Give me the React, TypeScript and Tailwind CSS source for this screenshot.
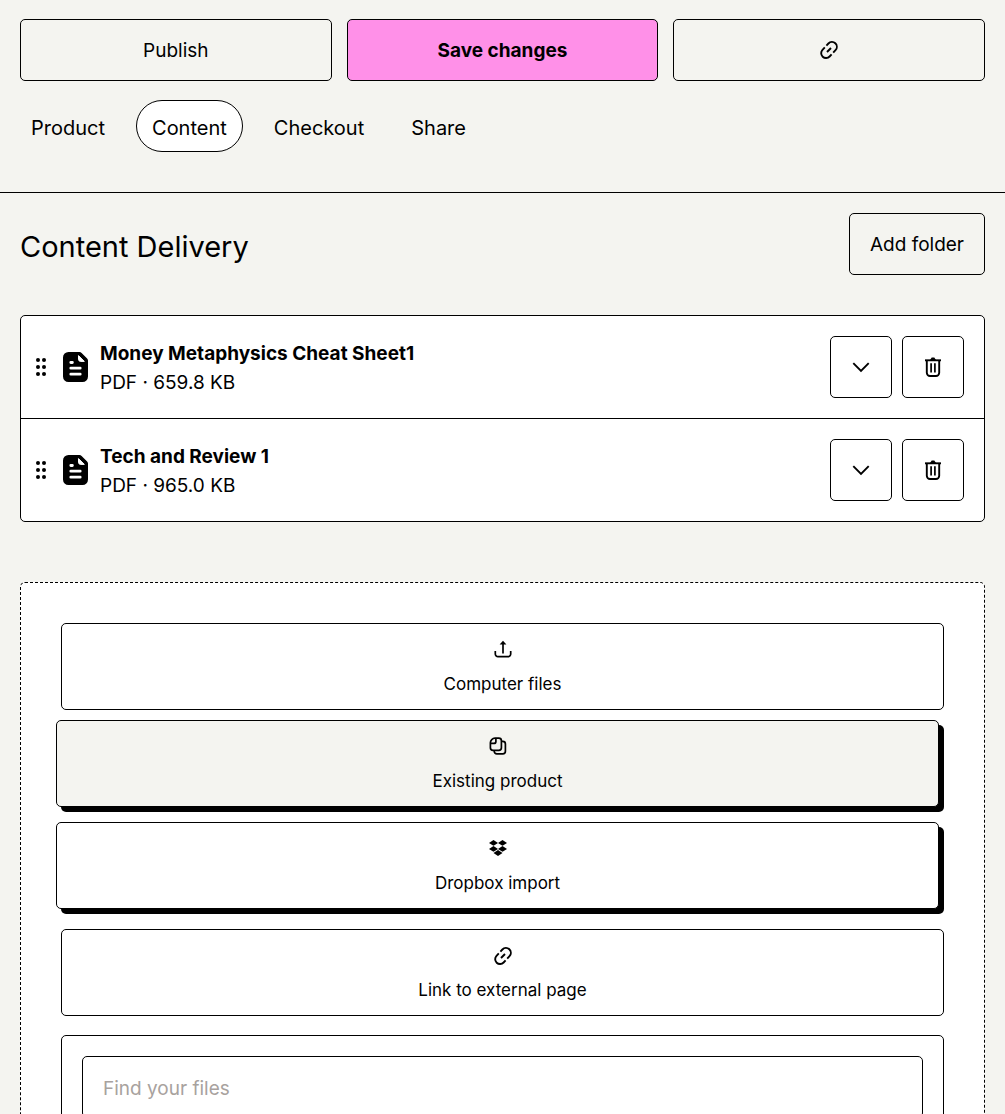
import React from "react";
import clsx from "clsx";

interface ProductFile {
  id: number;
  name: string;
  type: string;
  size: string;
}

interface UploadOption {
  label: string;
  icon: React.ReactNode;
  raised?: boolean;
  muted?: boolean;
}

const files: ProductFile[] = [
  { id: 1, name: "Money Metaphysics Cheat Sheet1", type: "PDF", size: "659.8 KB" },
  { id: 2, name: "Tech and Review 1", type: "PDF", size: "965.0 KB" },
];

const tabs = ["Product", "Content", "Checkout", "Share"];

const LinkIcon = () => (
  <svg width="20" height="20" viewBox="0 0 20 20" fill="none" stroke="currentColor" strokeWidth="1.9" aria-hidden="true">
    <path d="M7.400 5.600 9.400 3.500a4.700 4.700 0 0 1 7.100 6.700L14.200 12.600" />
    <path d="M12.600 14.400 10.600 16.500a4.700 4.700 0 0 1-7.100-6.700L5.800 7.400" />
    <path d="M8 12l4-4" />
  </svg>
);

const UploadIcon = () => (
  <svg width="18" height="18" viewBox="0 0 18 18" fill="none" stroke="currentColor" strokeWidth="1.7" aria-hidden="true">
    <path d="M9 13.500V2" />
    <path d="M5.600 4.400 9 .8l3.400 3.600z" fill="currentColor" stroke="none" />
    <path d="M1.300 11v3a2.700 2.700 0 0 0 2.700 2.700h10a2.700 2.700 0 0 0 2.700-2.700v-3" />
  </svg>
);

const CopyIcon = () => (
  <svg width="18" height="18" viewBox="0 0 18 18" fill="none" stroke="currentColor" strokeWidth="1.7" aria-hidden="true">
    <path d="M6 1.200h3.800a2.600 2.600 0 0 1 2.600 2.600v6.900a2.600 2.600 0 0 1-2.600 2.600H4a2.600 2.600 0 0 1-2.600-2.600V5.800A4.600 4.600 0 0 1 6 1.200z" />
    <path d="M6.900 1.400v3a2 2 0 0 1-2 2H1.600" />
    <path d="M13 4.400h.8a2.600 2.600 0 0 1 2.600 2.600v7.200a2.600 2.600 0 0 1-2.600 2.600H7.800a2.600 2.600 0 0 1-2.600-2.600v-.6" />
  </svg>
);

const DropboxIcon = () => (
  <svg width="18" height="18" viewBox="0 0 18 18" fill="currentColor" aria-hidden="true">
    <path d="M4.500 1 9 3.900 4.500 6.800 0 3.900z" />
    <path d="M13.500 1 18 3.900l-4.500 2.900L9 3.900z" />
    <path d="M4.500 7 9 9.900l-4.500 2.900L0 9.900z" />
    <path d="m13.500 7 4.500 2.900-4.500 2.900L9 9.900z" />
    <path d="m9 11 4.500 2.900L9 16.900l-4.500-3z" />
  </svg>
);

const DragIcon = () => (
  <svg width="10" height="18" viewBox="0 0 10 18" fill="currentColor" aria-hidden="true">
    {[2, 9, 16].map((y) => (
      <React.Fragment key={y}>
        <circle cx="2" cy={y} r="2" />
        <circle cx="8" cy={y} r="2" />
      </React.Fragment>
    ))}
  </svg>
);

const FileIcon = () => (
  <svg width="25" height="30" viewBox="0 0 25 30" aria-hidden="true">
    <path d="M5.500 0h11a3 3 0 0 1 2.100.9l5.500 5.600a3 3 0 0 1 .9 2.100V24.500a5.500 5.500 0 0 1-5.500 5.500h-14A5.500 5.500 0 0 1 0 24.500v-19A5.500 5.500 0 0 1 5.500 0z" fill="currentColor" />
    <path d="M15.500 3.600v3.600a2.200 2.200 0 0 0 2.200 2.200H21.300z" fill="#fff" stroke="#fff" strokeLinejoin="round" />
    <path d="M7.800 10.500h1.600M7.800 16.200h9.400M7.800 22.200h9.400" stroke="#fff" strokeWidth="2.800" strokeLinecap="round" />
  </svg>
);

const ChevronIcon = () => (
  <svg width="18" height="18" viewBox="0 0 18 18" fill="none" stroke="currentColor" strokeWidth="1.900" aria-hidden="true">
    <path d="M1.300 5.200 9 13l7.700-7.800" />
  </svg>
);

const TrashIcon = () => (
  <svg width="18" height="20" viewBox="0 0 18 20" fill="none" stroke="currentColor" strokeWidth="1.900" aria-hidden="true">
    <path d="M1 3.300h16" />
    <path d="M6 3 7.700.400h2.600L12 3z" fill="currentColor" stroke="none" />
    <path d="M2.800 3.300v12.500A3.200 3.200 0 0 0 6 19h6a3.200 3.200 0 0 0 3.200-3.200V3.300" />
    <path d="M7.100 6.300v9.200M10.900 6.300v9.200" strokeWidth="1.700" />
  </svg>
);

const options: UploadOption[] = [
  { label: "Computer files", icon: <UploadIcon /> },
  { label: "Existing product", icon: <CopyIcon />, raised: true, muted: true },
  { label: "Dropbox import", icon: <DropboxIcon />, raised: true },
  { label: "Link to external page", icon: <LinkIcon /> },
];

const FileRow = ({ file }: { file: ProductFile }) => (
  <li className="flex items-center justify-between px-5 py-5 not-first:border-t not-first:border-black">
    <div className="flex items-center">
      <span className="-ml-[5px] mr-[17px] cursor-grab">
        <DragIcon />
      </span>
      <FileIcon />
      <div className="ml-3 pt-[2px] leading-[29px]">
        <h3 className="font-bold">{file.name}</h3>
        <p>
          {file.type} · {file.size}
        </p>
      </div>
    </div>
    <div className="flex gap-[10px]">
      <button type="button" aria-label={`Expand ${file.name}`} className="flex size-[62px] items-center justify-center rounded-[5px] border border-black">
        <ChevronIcon />
      </button>
      <button type="button" aria-label={`Delete ${file.name}`} className="flex size-[62px] items-center justify-center rounded-[5px] border border-black">
        <TrashIcon />
      </button>
    </div>
  </li>
);

const App = () => {
  return (
    <div className="h-screen overflow-x-hidden overflow-y-auto bg-[#f4f4f0] font-[Inter,'Liberation_Sans',sans-serif] text-[19px] text-black">
      <header className="border-b border-black px-5 pt-[19px] pb-10">
        <div className="grid grid-cols-3 gap-[15px]">
          <button type="button" className="h-[62px] rounded-[5px] border border-black pt-[3px]">
            Publish
          </button>
          <button type="button" className="h-[62px] rounded-[5px] border border-black bg-[#ff90e8] pt-[3px] font-bold">
            Save changes
          </button>
          <button type="button" aria-label="Copy link" className="flex h-[62px] items-center justify-center rounded-[5px] border border-black">
            <LinkIcon />
          </button>
        </div>
        <nav className="-ml-[5px] mt-[19px] flex gap-[15px] text-[20px]">
          {tabs.map((tab) => (
            <a
              key={tab}
              href="#"
              className={clsx(
                "flex h-[52px] items-center rounded-full border px-[15px] pt-[3px]",
                tab === "Content" ? "border-black bg-white" : "border-transparent"
              )}
            >
              {tab}
            </a>
          ))}
        </nav>
      </header>
      <main className="px-5 pt-5">
        <div className="flex items-center justify-between">
          <h1 className="pt-[5px] text-[29px]">Content Delivery</h1>
          <button type="button" className="h-[62px] rounded-[5px] border border-black px-5 pt-[3px]">
            Add folder
          </button>
        </div>
        <ul className="mt-10 rounded-[5px] border border-black bg-white">
          {files.map((file) => (
            <FileRow key={file.id} file={file} />
          ))}
        </ul>
        {/* Upload area */}
        <section className="mt-[60px] rounded-[5px] border border-dashed border-black bg-white p-10">
          <div className="grid gap-[15px]">
            {options.map((option) => (
              <button
                key={option.label}
                type="button"
                className={clsx(
                  "flex h-[87px] flex-col items-center justify-between rounded-[5px] border border-black pt-4 pb-[13px] text-[17px] leading-6",
                  option.raised && "-translate-x-[5px] -translate-y-[5px] shadow-[5px_5px_0_#000]",
                  option.muted ? "bg-[#f4f4f0]" : "bg-white"
                )}
              >
                {option.icon}
                {option.label}
              </button>
            ))}
          </div>
          <div className="mt-[19px] rounded-[5px] border border-black p-5">
            <input
              type="text"
              aria-label="Find your files"
              placeholder="Find your files"
              className="h-[62px] w-full rounded-[5px] border border-black px-5 pt-[3px] placeholder:text-[#a8a29e]"
            />
          </div>
        </section>
      </main>
    </div>
  );
};

export default App;
